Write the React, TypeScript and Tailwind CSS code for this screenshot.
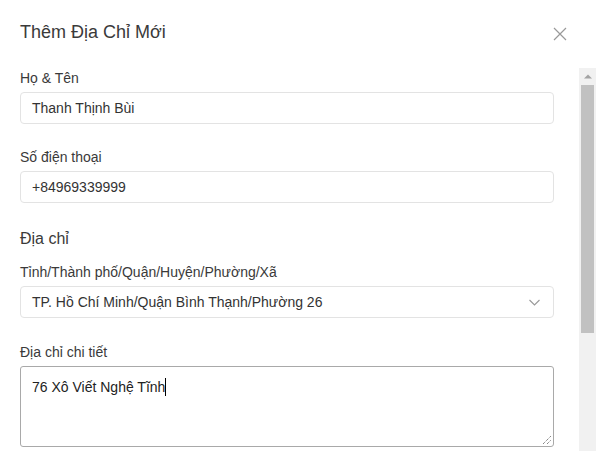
import React from "react";

function Label({ children }: { children: React.ReactNode }) {
  return <div className="text-[14px] leading-5 text-[#3a3a3a] mb-1">{children}</div>;
}

export default function App() {
  return (
    <div
      className="w-[596px] h-[451px] bg-white overflow-hidden flex flex-col"
      style={{ fontFamily: '"Liberation Sans", Arial, sans-serif' }}
    >
      <div className="h-[68px] shrink-0 flex items-start justify-between pl-5 pr-[29px] pt-5">
        <div className="text-[18px] leading-6 text-[#3a3a3a]">Thêm Địa Chỉ Mới</div>
        <svg width="14" height="14" viewBox="0 0 14 14" className="mt-[7px]">
          <path d="M1 1L13 13M13 1L1 13" stroke="#999" strokeWidth="1.2" />
        </svg>
      </div>
      <div className="flex-1 flex min-h-0">
        <div className="flex-1 pl-5 pr-[25px] flex flex-col">
          <Label>Họ &amp; Tên</Label>
          <div className="h-8 border border-[#e3e3e3] rounded-[4px] px-[11px] flex items-center text-[14px] text-[#333]">
            Thanh Thịnh Bùi
          </div>
          <div className="h-[23px]" />
          <Label>Số điện thoại</Label>
          <div className="h-8 border border-[#e3e3e3] rounded-[4px] px-[11px] flex items-center text-[14px] text-[#333]">
            +84969339999
          </div>
          <div className="text-[16px] leading-6 text-[#3a3a3a] mt-[24px]">Địa chỉ</div>
          <div className="mt-[11px]">
            <Label>Tỉnh/Thành phố/Quận/Huyện/Phường/Xã</Label>
          </div>
          <div className="h-8 border border-[#e3e3e3] rounded-[4px] pl-[11px] pr-[13px] flex items-center justify-between text-[14px] text-[#333]">
            <span>TP. Hồ Chí Minh/Quận Bình Thạnh/Phường 26</span>
            <svg width="11" height="7" viewBox="0 0 11 7">
              <path d="M0.5 1L5.5 6L10.5 1" stroke="#999" strokeWidth="1.1" fill="none" />
            </svg>
          </div>
          <div className="h-[24px]" />
          <Label>Địa chỉ chi tiết</Label>
          <div className="relative h-[81px] border border-[#a9a9a9] rounded-[3px] pl-[11px] pt-[10px] text-[14px] leading-5 text-[#222]">
            <span>76 Xô Viết Nghệ Tĩnh</span>
            <span className="inline-block w-px h-[18px] bg-black align-[-4px]" />
            <svg width="10" height="10" viewBox="0 0 10 10" className="absolute right-[1px] bottom-[1px]">
              <path d="M1 9L9 1M5 9L9 5" stroke="#555" strokeWidth="1" strokeDasharray="1 1" />
            </svg>
          </div>
        </div>
        <div className="w-[17px] shrink-0 bg-[#f1f1f1] flex flex-col items-center">
          <div className="h-[17px] w-full flex items-center justify-center">
            <svg width="8" height="5" viewBox="0 0 8 5">
              <path d="M0 4.5L4 0.5L8 4.5Z" fill="#a3a3a3" />
            </svg>
          </div>
          <div className="w-[13px] h-[248px] bg-[#c1c1c1]" />
        </div>
      </div>
    </div>
  );
}
